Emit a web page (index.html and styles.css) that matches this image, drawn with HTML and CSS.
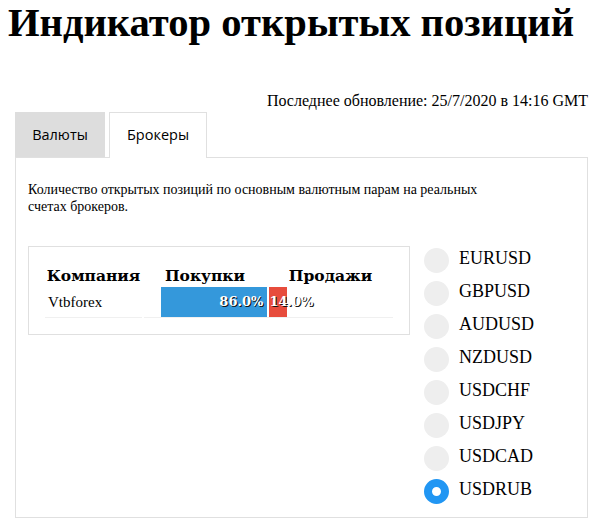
FILE: index.html
```html
<!DOCTYPE html>
<html>

<head>
	<meta charset="UTF-8">
	<title>Индикатор открытых позиций</title>
	<link rel="stylesheet" href="styles.css">
</head>

<body>
	<div id="page">
		<h1 class="title">Индикатор открытых позиций</h1>
		<p class="updated">Последнее обновление: 25/7/2020 в 14:16 GMT</p>

		<div class="tabs">
			<a href="javascript:;" class="tab">Валюты</a>
			<a href="javascript:;" class="tab active">Брокеры</a>
		</div>

		<div class="panel">
			<p class="desc">Количество открытых позиций по основным валютным парам на реальных счетах брокеров.</p>

			<div class="row">
				<div class="brokers">
					<table>
						<colgroup>
							<col class="c1">
							<col class="c2">
							<col class="c3">
						</colgroup>
						<tr>
							<th>Компания</th>
							<th>Покупки</th>
							<th>Продажи</th>
						</tr>
						<tr>
							<td class="name">Vtbforex</td>
							<td class="bars" colspan="2">
								<div class="bar">
									<span class="buy" style="width: 86%">86.0%</span>
									<span class="sell" style="width: 14%">14.0%</span>
								</div>
							</td>
						</tr>
					</table>
				</div>

				<ul class="pairs">
					<li><i></i>EURUSD</li>
					<li><i></i>GBPUSD</li>
					<li><i></i>AUDUSD</li>
					<li><i></i>NZDUSD</li>
					<li><i></i>USDCHF</li>
					<li><i></i>USDJPY</li>
					<li><i></i>USDCAD</li>
					<li class="on"><i></i>USDRUB</li>
				</ul>
			</div>
		</div>
	</div>
</body>

</html>
```

FILE: styles.css
```css
html,
body {
	margin: 0;
	padding: 0;
}

body {
	font-family: "Liberation Serif", "Times New Roman", serif;
	color: #000;
	background: #fff;
}

ul,
li,
p {
	margin: 0;
	padding: 0;
	list-style: none;
}

a {
	text-decoration: none;
	color: #000;
}

#page {
	padding: 0 18px 0 8px;
}

.title {
	margin: -1px 0 0;
	font-size: 40.6px;
	line-height: 48px;
	font-weight: bold;
	white-space: nowrap;
}

.updated {
	margin-top: 45px;
	text-align: right;
	font-size: 16px;
	line-height: 18px;
}

.tabs {
	display: flex;
	align-items: flex-start;
	gap: 4px;
	margin: 2px 0 -1px 7px;
}

.tab {
	box-sizing: border-box;
	width: 90px;
	height: 45px;
	text-align: center;
	font: 14.5px/45px "Open Sans", sans-serif;
	background: #ddd;
}

.tab.active {
	position: relative;
	width: 98px;
	height: 46px;
	background: #fff;
	border: 1px solid #e0e0e0;
	border-bottom: none;
	line-height: 44px;
}

.panel {
	margin-left: 7px;
	border: 1px solid #e0e0e0;
	padding: 23px 12px 13px;
}

.desc {
	max-width: 480px;
	font-size: 14px;
	line-height: 17px;
}

.row {
	display: flex;
	align-items: flex-start;
	gap: 14px;
	margin-top: 31px;
}

.brokers {
	width: 382px;
	box-sizing: border-box;
	border: 1px solid #e0e0e0;
	padding: 14px;
}

.brokers table {
	table-layout: fixed;
	width: 352px;
	border-spacing: 2px;
}

.c1 {
	width: 97px;
}

.c2 {
	width: 122px;
}

.c3 {
	width: 125px;
}

.brokers th {
	padding: 3px 0 0;
	font: bold 15.5px/19px "DejaVu Serif", serif;
	text-align: center;
}

.brokers td {
	padding: 0;
	height: 30px;
	border-bottom: 1px solid #f0f0f0;
}

.name {
	padding-left: 3px !important;
	font-size: 15px;
}

.bars {
	padding-left: 17px !important;
}

.bar {
	display: flex;
	gap: 2px;
	width: 126px;
	height: 30px;
}

.bar span {
	box-sizing: border-box;
	padding-right: 4px;
	text-align: right;
	white-space: nowrap;
	font: bold 13px/30px "DejaVu Serif", serif;
	color: #fff;
	text-shadow: 1px 1px 0 #111;
}

.buy {
	background: #3498db;
}

.sell {
	background: #e74c3c;
}

.pairs {
	display: flex;
	flex-direction: column;
	gap: 8px;
	margin-top: 2px;
}

.pairs li {
	display: flex;
	align-items: flex-start;
	gap: 10px;
	font-size: 18px;
	line-height: 21px;
}

.pairs i {
	width: 25px;
	height: 25px;
	border-radius: 50%;
	background: #eee;
}

.pairs li.on i {
	box-sizing: border-box;
	border: 8.5px solid #2196f3;
	background: #fff;
}
```
